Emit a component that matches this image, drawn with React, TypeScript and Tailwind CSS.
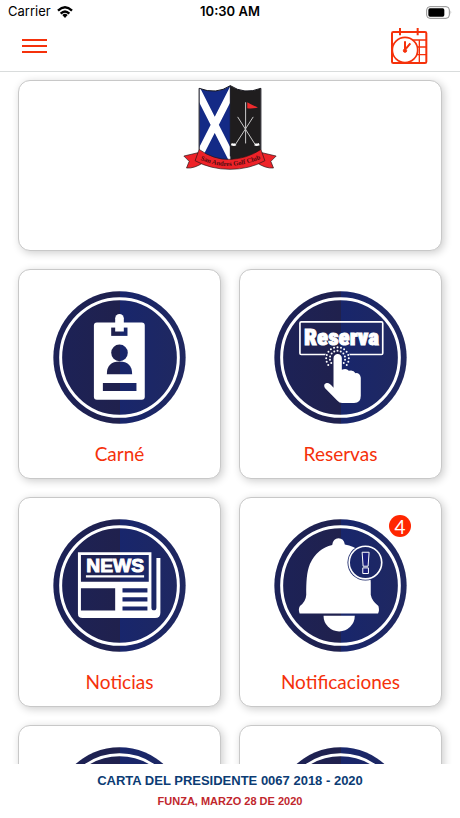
import type { ReactNode } from "react";

// Disc with the white ring that every menu icon sits on
const Disc = ({ id, children }: { id: string; children?: ReactNode }) => (
  <svg viewBox="0 0 400 400" className="h-[133px] w-[133px]" aria-hidden="true">
    <defs>
      <linearGradient
        id={id}
        gradientUnits="userSpaceOnUse"
        x1="0"
        y1="0"
        x2="400"
        y2="0"
      >
        <stop offset="0" stopColor="#1c2258" />
        <stop offset="0.5" stopColor="#20214d" />
        <stop offset="0.5" stopColor="#18266c" />
        <stop offset="1" stopColor="#20285f" />
      </linearGradient>
    </defs>
    <circle cx="200" cy="200" r="199" fill={`url(#${id})`} />
    <circle cx="200" cy="200" r="177" fill="none" stroke="#fff" strokeWidth="9" />
    {children}
  </svg>
);

const CardIcon = () => (
  <Disc id="carne">
    <rect x="123" y="95" width="153" height="232" rx="9" fill="#fff" />
    <path d="M175 110H224V135H175Z" fill="url(#carne)" />
    <path d="M187 82a13 13 0 0 1 26 0V122H187Z" fill="#fff" />
    <g fill="url(#carne)">
      <circle cx="200" cy="186" r="25" />
      <path d="M162 250Q162 212 200 212T238 250Z" />
      <path d="M150 277H251V301H150Z" />
    </g>
  </Disc>
);

const dots = [
  { radius: 23, count: 11 },
  { radius: 34, count: 15 },
].flatMap(({ radius, count }) =>
  Array.from({ length: count }, (_, i) => {
    const angle = ((-215 + (250 * i) / (count - 1)) * Math.PI) / 180;
    return {
      x: 191 + radius * Math.cos(angle),
      y: 203 + radius * Math.sin(angle),
    };
  })
);

const BookingIcon = () => (
  <Disc id="reservas">
    <rect
      x="78"
      y="93"
      width="249"
      height="98"
      rx="4"
      fill="none"
      stroke="#fff"
      strokeWidth="5"
    />
    <text
      x="203"
      y="162"
      textAnchor="middle"
      fontSize="69"
      fontWeight="900"
      fill="#fff"
      stroke="#fff"
      strokeWidth="3"
      className="font-['Roboto_Condensed',Roboto,sans-serif]"
    >
      Reserva
    </text>
    <path d="M153 203a38 38 0 0 1 76 0Z" fill="url(#reservas)" />
    {dots.map((dot, i) => (
      <circle key={i} cx={dot.x} cy={dot.y} r="3" fill="#fff" />
    ))}
    <path
      d="M179 202a12 12 0 0 1 25 0V237q14-6 21 3q14-4 20 7q14-1 16 14V315q0 22-20 22H205q-8 0-15-8L153 292q-6-12 5-15q9-2 21 14Z"
      fill="#fff"
    />
  </Disc>
);

const NewsIcon = () => (
  <Disc id="noticias">
    <path
      d="M75 100H296V266a7 8 0 0 0 15 0V117H323V282q0 16-16 16H89q-14 0-14-14Z"
      fill="#fff"
    />
    <g fill="url(#noticias)">
      <path d="M84 108H288V189H84ZM84 208H187V275H84Z" />
      <path d="M209 208H284V221H209ZM209 235H284V248H209ZM209 263H284V275H209Z" />
    </g>
    <text
      x="187"
      y="160"
      textAnchor="middle"
      fontSize="58"
      fontWeight="700"
      fill="#fff"
      stroke="#fff"
      strokeWidth="3"
      className="font-['Liberation_Sans',Arial,sans-serif]"
    >
      NEWS
    </text>
    <path d="M99 169H274V176H99Z" fill="#fff" />
  </Disc>
);

const BellIcon = () => (
  <Disc id="notificaciones">
    <path
      d="M175 78Q178 58 194 58T213 77Q240 82 260 98Q291 130 291 190V228Q294 246 314 262Q318 276 313 284H77Q72 272 78 262Q96 248 97 228C97 190 98 160 108 135Q130 88 175 78Z"
      fill="#fff"
    />
    <path d="M149 291H243A47 47 0 0 1 149 291Z" fill="#fff" />
    <circle cx="275" cy="131" r="54" fill="url(#notificaciones)" />
    <circle cx="275" cy="131" r="49" fill="none" stroke="#fff" strokeWidth="5" />
    <path
      d="M265 100H286L283 142H268ZM267 147H284V164H267Z"
      fill="#1b1f7c"
      stroke="#fff"
      strokeWidth="3"
    />
  </Disc>
);

const Crest = () => (
  <svg
    viewBox="0 0 282 256"
    className="h-[85px] w-[94px]"
    role="img"
    aria-label="Club crest"
  >
    <defs>
      <clipPath id="shield">
        <path d="M48 10Q100 30 142 2Q184 30 234 10V195Q190 245 142 248Q92 245 48 195Z" />
      </clipPath>
      <clipPath id="saltire">
        <path d="M48 10Q100 30 142 2V248H48Z" />
      </clipPath>
    </defs>
    <g clipPath="url(#shield)">
      <path d="M48 0H142V250H48Z" fill="#142a86" />
      <path d="M142 0H234V250H142Z" fill="#1f1d1e" />
    </g>
    <path
      d="M36 4L154 236M154 4L36 236"
      clipPath="url(#saltire)"
      stroke="#fff"
      strokeWidth="22"
    />
    <path
      d="M48 195V10Q100 30 142 2Q184 30 234 10V195M142 2V215"
      fill="none"
      stroke="#15151c"
      strokeWidth="3"
    />
    <g fill="none" stroke="#c9c9c9" strokeWidth="3">
      <path d="M188 52V176M164 96L216 178M211 96L158 178" />
      <path d="M216 178q4 4 13 0M158 178q-4 4-13 0" stroke="#fff" strokeWidth="7" />
    </g>
    <path d="M193 52Q206 60 225 68Q208 72 193 70Z" fill="#ef2b2d" />
    <g fill="#ee2228" stroke="#211517" strokeWidth="2" strokeLinejoin="round">
      <path d="M44 204L2 214L18 230L10 250Q34 252 60 234Z" />
      <path d="M238 204L280 214L264 230L272 250Q248 252 222 234Z" />
      <path d="M48 194Q92 226 142 224T234 194L246 228Q200 254 141 254T36 228Z" />
    </g>
    <path id="ribbon" d="M45 222Q96 246 141 244T240 220" fill="none" />
    <text
      fontSize="20"
      fontWeight="700"
      fill="#4d0d10"
      textAnchor="middle"
      className="font-['Liberation_Serif',serif]"
    >
      <textPath href="#ribbon" startOffset="50%">
        San Andres Golf Club
      </textPath>
    </text>
  </svg>
);

const StatusBar = () => (
  <div className="grid grid-cols-3 items-center px-2 h-6 text-[13px] text-black">
    <div className="flex items-center gap-1.5">
      <span>Carrier</span>
      <svg viewBox="0 0 48 36" className="h-3 w-4" aria-hidden="true">
        <g fill="none" stroke="#000" strokeWidth="7">
          <path d="M3 14Q24-6 45 14" />
          <path d="M11 23Q24 10 37 23" />
        </g>
        <path d="M16 27Q24 20 32 27L24 36Z" />
      </svg>
    </div>
    <span className="text-center font-semibold">10:30 AM</span>
    <svg
      viewBox="0 0 78 39"
      className="h-[13px] w-[26px] justify-self-end"
      aria-hidden="true"
    >
      <rect
        x="2"
        y="2"
        width="68"
        height="35"
        rx="10"
        fill="none"
        stroke="#8f8f8f"
        strokeWidth="3"
      />
      <rect x="7" y="7" width="48" height="25" rx="5" />
      <path d="M74 13q4 6 0 13Z" fill="#8f8f8f" />
    </svg>
  </div>
);

const Header = () => (
  <header className="shrink-0 border-b border-[#d9dcdc] bg-white">
    <StatusBar />
    <div className="flex h-[47px] items-center justify-between pr-8 pb-1 pl-[22px]">
      <button type="button" aria-label="Menú" className="cursor-pointer">
        <svg viewBox="0 0 25 16" className="h-4 w-[25px]">
          <path d="M0 2H25M0 8H25M0 14H25" stroke="#f5310b" strokeWidth="2" />
        </svg>
      </button>
      <button type="button" aria-label="Agenda" className="cursor-pointer">
        <svg
          viewBox="0 0 114 108"
          className="h-9 w-[38px]"
          fill="none"
          stroke="#f5310b"
          strokeWidth="6"
        >
          <rect x="6" y="12" width="103" height="93" rx="4" />
          <path d="M30 0V22M83 0V22" />
          <path d="M66 36H108M80 57H108M80 80H108M88 36V105" strokeWidth="4" />
          <circle cx="45" cy="66" r="38" fill="#fff" strokeWidth="5" />
          <path d="M45 65V40M48 62L61 46" />
          <circle cx="45" cy="68" r="5" fill="#f5310b" strokeWidth="3" />
        </svg>
      </button>
    </div>
  </header>
);

const menuItems = [
  { name: "Carné", href: "#carne", icon: <CardIcon /> },
  { name: "Reservas", href: "#reservas", icon: <BookingIcon /> },
  { name: "Noticias", href: "#noticias", icon: <NewsIcon /> },
  {
    name: "Notificaciones",
    href: "#notificaciones",
    icon: <BellIcon />,
    badge: 4,
  },
  { name: "", href: "#mas-1", icon: <Disc id="mas-1" /> },
  { name: "", href: "#mas-2", icon: <Disc id="mas-2" /> },
];

export default function App() {
  return (
    <div className="flex h-screen flex-col overflow-hidden bg-white font-[Inter,sans-serif]">
      <Header />

      <main className="min-h-0 flex-1 overflow-y-auto px-[18px] pt-2 pb-4 [scrollbar-width:none]">
        <section className="flex h-[171px] justify-center rounded-xl border border-[#c8c8c8] bg-white pt-1 shadow-[2px_2px_8px_rgba(0,0,0,0.2)]">
          <Crest />
        </section>

        <nav className="mt-[18px] grid grid-cols-2 gap-[18px]">
          {menuItems.map((item) => (
            <a
              key={item.href}
              href={item.href}
              className="relative flex h-[210px] flex-col items-center rounded-xl border border-[#c8c8c8] bg-white pt-[21px] shadow-[2px_2px_8px_rgba(0,0,0,0.2)]"
            >
              {item.icon}
              <span className="mt-4 font-[Lato,sans-serif] text-[19px] leading-7 text-[#f5310b]">
                {item.name}
              </span>
              {item.badge && (
                <span className="absolute top-[17px] right-[30px] flex size-[22px] items-center justify-center rounded-full bg-[#ff2600] font-[Lato,sans-serif] text-[19px] leading-none text-white">
                  {item.badge}
                </span>
              )}
            </a>
          ))}
        </nav>
      </main>

      <footer className="h-[54px] shrink-0 bg-white pt-1.5 text-center font-['Liberation_Sans',Arial,sans-serif] font-bold">
        <p className="text-[13px] leading-[22px] text-[#0b3c74]">
          CARTA DEL PRESIDENTE 0067 2018 - 2020
        </p>
        <p className="text-[11px] leading-[18px] text-[#c1272d]">
          FUNZA, MARZO 28 DE 2020
        </p>
      </footer>
    </div>
  );
}
